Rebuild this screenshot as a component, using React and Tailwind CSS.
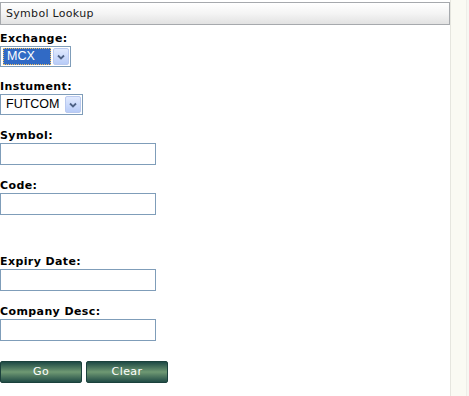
import React from "react";

const verdana = { fontFamily: '"DejaVu Sans", Verdana, sans-serif' };

function Label({ children, className = "" }) {
  return (
    <div
      className={`h-[14px] leading-[14px] text-[11px] font-bold tracking-[0.4px] text-black ${className}`}
      style={verdana}
    >
      {children}
    </div>
  );
}

function Arrow() {
  return (
    <div className="w-[16px] h-[17px] rounded-[2px] border border-[#b9c9ef] bg-gradient-to-b from-[#e1eafe] to-[#b8ccf8] flex items-center justify-center">
      <svg width="8" height="6" viewBox="0 0 8 6">
        <path d="M1 1.5 L4 4.5 L7 1.5" fill="none" stroke="#4d6185" strokeWidth="1.8" />
      </svg>
    </div>
  );
}

function Select({ value, width, focused }) {
  return (
    <div
      className={`h-[21px] border border-[#7f9db9] bg-white flex items-center pl-[2px] pr-[1px] gap-[2px] ${width}`}
      style={{ fontFamily: '"Liberation Sans", Arial, sans-serif' }}
    >
      {focused ? (
        <div className="flex-1 h-[17px] bg-[#316ac5] border border-dotted border-[#f0c060] text-white text-[12.5px] leading-[15px] pl-[3px]">
          {value}
        </div>
      ) : (
        <div className="flex-1 h-[17px] text-black text-[12.5px] leading-[17px] pl-[3px]">
          {value}
        </div>
      )}
      <Arrow />
    </div>
  );
}

function Input({ className = "" }) {
  return <div className={`w-[156px] h-[22px] border border-[#7f9db9] bg-white ${className}`} />;
}

function Button({ children }) {
  return (
    <button
      className="w-[82px] h-[22px] rounded-[2px] border border-[#1b413c] bg-gradient-to-b from-[#1e4a45] via-[#6f9973] to-[#214c46] text-white text-[11px] leading-[20px] tracking-[0.4px]"
      style={verdana}
    >
      {children}
    </button>
  );
}

export default function App() {
  return (
    <div className="w-[469px] h-[396px] bg-white flex overflow-hidden">
      <div className="w-[450px] pt-[2px]">
        <div
          className="h-[23px] border border-[#a6a9ad] bg-gradient-to-b from-white via-[#f4f4f4] to-[#e2e2e2] text-[11px] leading-[21px] pl-[5px] tracking-[0.3px] text-[#1a1a1a]"
          style={verdana}
        >
          Symbol Lookup
        </div>

        <Label className="mt-[7px]">Exchange:</Label>
        <Select value="MCX" width="w-[71px]" focused />

        <Label className="mt-[13px]">Instument:</Label>
        <Select value="FUTCOM" width="w-[83px]" />

        <Label className="mt-[14px]">Symbol:</Label>
        <Input />

        <Label className="mt-[14px]">Code:</Label>
        <Input />

        <Label className="mt-[40px]">Expiry Date:</Label>
        <Input />

        <Label className="mt-[14px]">Company Desc:</Label>
        <Input />

        <div className="mt-[20px] flex gap-[4px]">
          <Button>Go</Button>
          <Button>Clear</Button>
        </div>
      </div>
      <div className="w-[16px] h-full border-l border-[#e6e6df] bg-[#fafaf3]" />
      <div className="w-[3px] h-full border-l border-[#eeeee8] bg-[#f7f7f2]" />
    </div>
  );
}
